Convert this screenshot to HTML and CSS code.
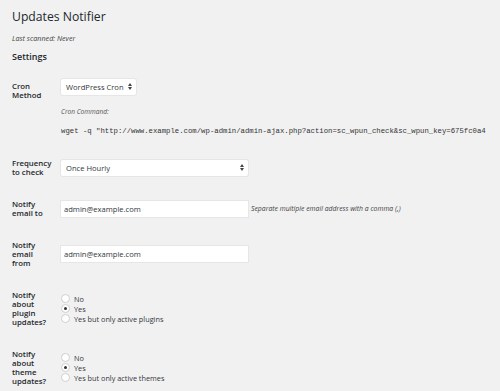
FILE: index.html
```html
<!DOCTYPE html>
<html lang="en">
<head>
    <meta charset="UTF-8">
    <title>Updates Notifier</title>
    <link rel="stylesheet" href="styles.css">
</head>
<body>
    <div class="wrap">
        <h1 class="page-title">Updates Notifier</h1>
        <p class="last-scanned">Last scanned: Never</p>
        <h2 class="section-title">Settings</h2>

        <div class="form-rows">
            <div class="form-row row-cron">
                <div class="form-label">Cron Method</div>
                <div class="form-field">
                    <div class="select select-short">
                        <span>WordPress Cron</span>
                        <span class="select-arrow"></span>
                    </div>
                    <p class="cron-label">Cron Command:</p>
                    <p class="cron-command">wget -q "http://www.example.com/wp-admin/admin-ajax.php?action=sc_wpun_check&amp;sc_wpun_key=675fc0a4</p>
                </div>
            </div>

            <div class="form-row">
                <div class="form-label">Frequency to check</div>
                <div class="form-field">
                    <div class="select select-wide">
                        <span>Once Hourly</span>
                        <span class="select-arrow"></span>
                    </div>
                </div>
            </div>

            <div class="form-row">
                <div class="form-label">Notify email to</div>
                <div class="form-field field-line">
                    <div class="text-input">admin@example.com</div>
                    <span class="description">Separate multiple email address with a comma (,)</span>
                </div>
            </div>

            <div class="form-row">
                <div class="form-label">Notify email from</div>
                <div class="form-field">
                    <div class="text-input">admin@example.com</div>
                </div>
            </div>

            <div class="form-row">
                <div class="form-label">Notify about plugin updates?</div>
                <ul class="form-field radio-list">
                    <li><span class="radio"></span>No</li>
                    <li><span class="radio checked"></span>Yes</li>
                    <li><span class="radio"></span>Yes but only active plugins</li>
                </ul>
            </div>

            <div class="form-row">
                <div class="form-label">Notify about theme updates?</div>
                <ul class="form-field radio-list">
                    <li><span class="radio"></span>No</li>
                    <li><span class="radio checked"></span>Yes</li>
                    <li><span class="radio"></span>Yes but only active themes</li>
                </ul>
            </div>
        </div>
    </div>
</body>
</html>
```

FILE: styles.css
```css
* {
    margin: 0;
    padding: 0;
    box-sizing: border-box;
}

body {
    font-family: "Open Sans", "Liberation Sans", sans-serif;
    background: #f1f1f1;
    color: #23282d;
    overflow: hidden;
}

.wrap {
    padding: 9px 0 0 12px;
}

.page-title {
    font-size: 12.2px;
    font-weight: 400;
    line-height: 16px;
    color: #23282d;
}

.last-scanned {
    margin-top: 8px;
    font-size: 7.2px;
    line-height: 10px;
    font-style: italic;
    color: #444;
}

.section-title {
    margin-top: 7.5px;
    font-size: 9px;
    font-weight: 600;
    line-height: 12px;
}

/* settings rows */

.form-rows {
    display: flex;
    flex-direction: column;
    gap: 23px;
    margin-top: 16px;
}

.form-row {
    display: grid;
    grid-template-columns: 40px 1fr;
    column-gap: 9px;
    align-items: center;
}

.row-cron {
    align-items: start;
}

.row-cron .form-label {
    padding-top: 3px;
}

.form-label {
    font-size: 7.8px;
    font-weight: 600;
    line-height: 9px;
    color: #23282d;
}

.form-field {
    white-space: nowrap;
}

.select {
    display: flex;
    align-items: center;
    justify-content: space-between;
    height: 16px;
    padding: 0 4px 0 5px;
    background: #fff;
    border-radius: 2px;
    box-shadow: 0 0 0 1px #e6e6e6;
    font-size: 7.6px;
    color: #32373c;
}

.select-short {
    width: 75px;
}

.select-wide {
    width: 187px;
}

.select-arrow {
    width: 4px;
    height: 7px;
    position: relative;
}

.select-arrow::before,
.select-arrow::after {
    content: '';
    position: absolute;
    left: 0;
    border-left: 2px solid transparent;
    border-right: 2px solid transparent;
}

.select-arrow::before {
    top: 0;
    border-bottom: 3px solid #444;
}

.select-arrow::after {
    bottom: 0;
    border-top: 3px solid #444;
}

.cron-label {
    margin-top: 12px;
    font-size: 6.6px;
    line-height: 10px;
    font-style: italic;
    color: #555;
}

.cron-command {
    margin-top: 9px;
    font-family: "Liberation Mono", "DejaVu Sans Mono", monospace;
    font-size: 7.3px;
    line-height: 10px;
    color: #333;
    overflow: hidden;
}

.field-line {
    display: flex;
    align-items: center;
    gap: 3px;
}

.text-input {
    width: 187px;
    height: 16px;
    padding: 0 3px;
    line-height: 16px;
    background: #fff;
    box-shadow: 0 0 0 1px #e6e6e6;
    font-size: 7.6px;
    color: #32373c;
}

.description {
    font-size: 6.85px;
    font-style: italic;
    color: #444;
}

.radio-list {
    list-style: none;
}

.radio-list li {
    display: flex;
    align-items: center;
    gap: 4px;
    height: 10px;
    font-size: 7.3px;
    color: #32373c;
}

.radio {
    display: flex;
    align-items: center;
    justify-content: center;
    width: 9px;
    height: 9px;
    border-radius: 50%;
    background: #fff;
    border: 1px solid #cfcfcf;
}

.radio.checked::after {
    content: '';
    width: 3px;
    height: 3px;
    border-radius: 50%;
    background: #333;
}
```
